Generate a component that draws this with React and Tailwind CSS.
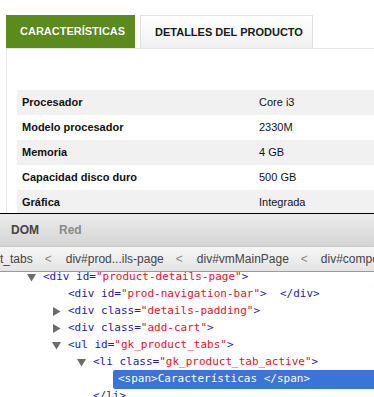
import React from "react";

const specs = [
  ["Procesador", "Core i3"],
  ["Modelo procesador", "2330M"],
  ["Memoria", "4 GB"],
  ["Capacidad disco duro", "500 GB"],
  ["Gráfica", "Integrada"],
];

function Arrow({ open }) {
  return (
    <svg width="9" height="9" viewBox="0 0 9 9" className="shrink-0">
      {open ? <path d="M0 1 L9 1 L4.5 8.5 Z" fill="#6b6b6b" /> : <path d="M1 0 L8.5 4.5 L1 9 Z" fill="#6b6b6b" />}
    </svg>
  );
}

const T = ({ children }) => <span className="text-[#1f22a8]">{children}</span>;
const V = ({ children }) => <span className="text-[#e3122c]">{children}</span>;

function Line({ indent, arrow, children }) {
  return (
    <div className="flex h-[17px] items-center whitespace-pre" style={{ paddingLeft: indent - 16 }}>
      <div className="w-[16px] flex items-center">{arrow !== undefined && <Arrow open={arrow} />}</div>
      {children}
    </div>
  );
}

export default function App() {
  return (
    <div className="w-[374px] h-[397px] overflow-hidden bg-white flex flex-col font-['Liberation_Sans',Arial,sans-serif]">
      {/* page */}
      <div className="h-[213px] shrink-0 pt-[15px] pl-[6px] overflow-hidden">
        <div className="flex h-[33px] gap-[5px]">
          <div className="w-[129px] bg-[#5b8b1b] text-white font-bold text-[11px] uppercase flex items-center pl-[14px] [text-shadow:0_0_1px_rgba(0,0,0,0.3)]">
            Características
          </div>
          <div className="w-[173px] border border-b-0 border-[#e3e3e3] bg-gradient-to-b from-white to-[#f0f0f0] text-[#1a1a1a] font-bold text-[11px] uppercase flex items-center pl-[14px]">
            Detalles del producto
          </div>
        </div>
        <div className="border-l border-t border-[#e6e6e6] h-full pl-[10px] pt-[41px]">
          {specs.map(([k, v], i) => (
            <div key={k} className={`flex h-[25px] items-center text-[11px] text-[#111] ${i % 2 === 0 ? "bg-[#f1f1f1]" : "bg-white"}`}>
              <div className="w-[242px] pl-[5px] font-bold">{k}</div>
              <div>{v}</div>
            </div>
          ))}
        </div>
      </div>
      <div className="h-px bg-black shrink-0" />
      {/* devtools toolbar */}
      <div className="h-[32px] shrink-0 bg-gradient-to-b from-[#ececec] to-[#d4d4d4] flex items-center pl-[11px] gap-[20px] text-[12px] font-bold">
        <span className="text-[#444]">DOM</span>
        <span className="text-[#8a8a8a]">Red</span>
      </div>
      {/* breadcrumb */}
      <div className="h-[26px] shrink-0 border-t border-[#c9c9c9] border-b border-b-[#9a9a9a] bg-gradient-to-b from-[#f6f6f6] to-[#e4e4e4] flex items-center text-[12px] text-[#444] whitespace-nowrap">
        <span className="-ml-[6px]">ct_tabs</span>
        <span className="text-[#888] ml-[12px] mr-[14px]">&lt;</span>
        <span>div#prod...ils-page</span>
        <span className="text-[#888] ml-[12px] mr-[14px]">&lt;</span>
        <span>div#vmMainPage</span>
        <span className="text-[#888] ml-[12px] mr-[13px]">&lt;</span>
        <span>div#compo</span>
      </div>
      {/* tree */}
      <div className="flex-1 overflow-hidden font-['DejaVu_Sans_Mono',monospace] text-[11px]">
        <div className="-mt-[3px]">
          <Line indent={43} arrow={true}>
            <T>&lt;div id=</T><V>"product-details-page"</V><T>&gt;</T>
          </Line>
          <Line indent={68}>
            <T>&lt;div id=</T><V>"prod-navigation-bar"</V><T>&gt;  &lt;/div&gt;</T>
          </Line>
          <Line indent={68} arrow={false}>
            <T>&lt;div class=</T><V>"details-padding"</V><T>&gt;</T>
          </Line>
          <Line indent={68} arrow={false}>
            <T>&lt;div class=</T><V>"add-cart"</V><T>&gt;</T>
          </Line>
          <Line indent={68} arrow={true}>
            <T>&lt;ul id=</T><V>"gk_product_tabs"</V><T>&gt;</T>
          </Line>
          <Line indent={93} arrow={true}>
            <T>&lt;li class=</T><V>"gk_product_tab_active"</V><T>&gt;</T>
          </Line>
          <div className="flex h-[17px] items-center pl-[113px]">
            <div className="flex-1 h-[19px] bg-[#3a74d6] rounded-l-[2px] text-white flex items-center pl-[5px] whitespace-pre">
              &lt;span&gt;Características &lt;/span&gt;
            </div>
          </div>
          <Line indent={93}>
            <T>&lt;/li&gt;</T>
          </Line>
        </div>
      </div>
    </div>
  );
}
